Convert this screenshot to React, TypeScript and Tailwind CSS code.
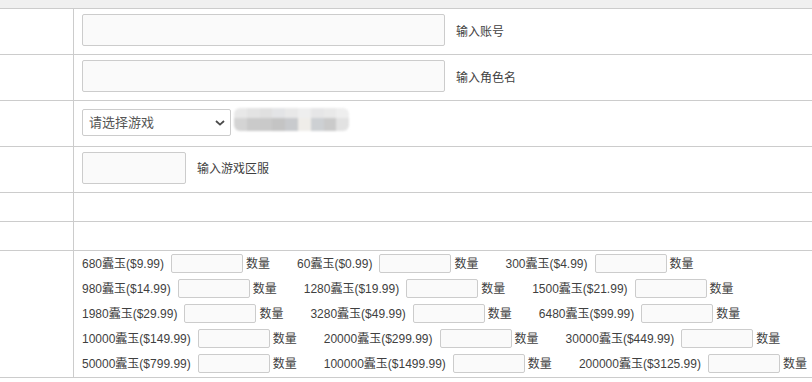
import React from 'react';

type Pack = { label: string };

const packRows: Pack[][] = [
  [{ label: '680蠹玉($9.99)' }, { label: '60蠹玉($0.99)' }, { label: '300蠹玉($4.99)' }],
  [{ label: '980蠹玉($14.99)' }, { label: '1280蠹玉($19.99)' }, { label: '1500蠹玉($21.99)' }],
  [{ label: '1980蠹玉($29.99)' }, { label: '3280蠹玉($49.99)' }, { label: '6480蠹玉($99.99)' }],
  [{ label: '10000蠹玉($149.99)' }, { label: '20000蠹玉($299.99)' }, { label: '30000蠹玉($449.99)' }],
  [{ label: '50000蠹玉($799.99)' }, { label: '100000蠹玉($1499.99)' }, { label: '200000蠹玉($3125.99)' }],
];

// blurred mosaic where the original hides some text
const mosaicTop = ['#e8e8e8', '#e3e3e3', '#e0e0e0', '#e3e4e6', '#e8e8e8', '#eeeeee', '#e6e6e7', '#e9e9e9', '#eeeeee'];
const mosaicBottom = ['#d4d4d4', '#cacaca', '#c9c9c9', '#c4c4c4', '#c8cacd', '#efede9', '#cdd0d3', '#cacaca', '#e2e2e2'];

const Row: React.FC<{ h: string; children?: React.ReactNode }> = ({ h, children }) => (
  <div className="flex border-b border-[#cccccc]">
    <div className={`w-[74px] shrink-0 border-r border-[#cccccc] ${h}`} />
    <div className={`flex-1 pl-2 ${h}`}>{children}</div>
  </div>
);

const inputCls = 'block rounded-[2px] border border-[#cccccc] bg-[#fafafa] outline-none';

export default function App() {
  return (
    <div
      className="w-[812px] h-[382px] overflow-hidden bg-white text-[12px] text-[#3f3f3f]"
      style={{ fontFamily: '"Liberation Sans", Arial, "Noto Sans CJK SC", sans-serif' }}
    >
      <div className="h-[9px] bg-[#f0f0f0] border-b border-[#cccccc]" />

      <Row h="h-[45px]">
        <div className="flex items-center pt-[5px]">
          <input className={`${inputCls} w-[363px] h-[32px]`} />
          <span className="ml-[11px] pt-[3px]">输入账号</span>
        </div>
      </Row>

      <Row h="h-[45px]">
        <div className="flex items-center pt-[5px]">
          <input className={`${inputCls} w-[363px] h-[32px]`} />
          <span className="ml-[11px] pt-[3px]">输入角色名</span>
        </div>
      </Row>

      <Row h="h-[45px]">
        <div className="flex items-start pt-[8px]">
          <div className="relative w-[149px] h-[27px]">
            <select className="appearance-none w-full h-full rounded-[2px] border border-[#cccccc] bg-white pl-[6px] text-[13px] text-[#555555] outline-none">
              <option>请选择游戏</option>
            </select>
            <svg
              className="pointer-events-none absolute right-[6px] top-[11px]"
              width="10"
              height="6"
              viewBox="0 0 10 6"
              fill="none"
            >
              <path d="M1 1l4 3.6L9 1" stroke="#4a4a4a" strokeWidth="1.8" />
            </svg>
          </div>
          <div className="ml-[3px] mt-[-1px] flex flex-col overflow-hidden rounded-[6px] blur-[1px]">
            <div className="flex h-[10px]">
              {mosaicTop.map((c, i) => (
                <div key={i} className="w-[12.8px] h-full" style={{ backgroundColor: c }} />
              ))}
            </div>
            <div className="flex h-[13px]">
              {mosaicBottom.map((c, i) => (
                <div key={i} className="w-[12.8px] h-full" style={{ backgroundColor: c }} />
              ))}
            </div>
          </div>
        </div>
      </Row>

      <Row h="h-[45px]">
        <div className="flex items-center pt-[5px]">
          <input className={`${inputCls} w-[104px] h-[32px]`} />
          <span className="ml-[11px] pt-[2px]">输入游戏区服</span>
        </div>
      </Row>

      <Row h="h-[28px]" />
      <Row h="h-[28px]" />

      <Row h="h-[126px]">
        <div className="flex flex-col pb-[1px]">
          {packRows.map((row, ri) => (
            <div key={ri} className="flex h-[25px] items-center whitespace-nowrap">
              {row.map(p => (
                <div key={p.label} className="flex items-center mr-[27px]">
                  <span>{p.label}</span>
                  <input className={`${inputCls} ml-[7px] w-[72px] h-[19px]`} />
                  <span className="ml-[3px]">数量</span>
                </div>
              ))}
            </div>
          ))}
        </div>
      </Row>
    </div>
  );
}
